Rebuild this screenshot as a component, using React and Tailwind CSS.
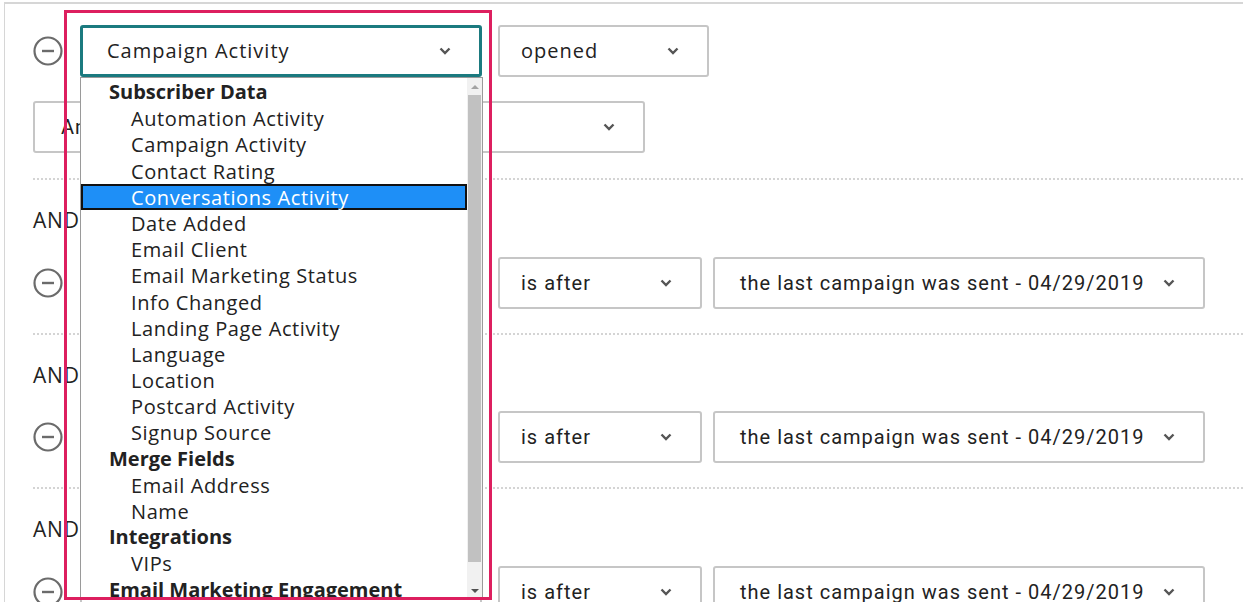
import clsx from 'clsx';

const Chevron = () => (
  <svg width="12" height="8" viewBox="0 0 12 8" className="shrink-0">
    <path d="M1.5 1.5L6 6l4.5-4.5" fill="none" stroke="#555" strokeWidth="2.4" />
  </svg>
);

const MinusCircle = () => (
  <svg width="30" height="30" viewBox="0 0 30 30" className="shrink-0">
    <circle cx="15" cy="15" r="13.5" fill="none" stroke="#6b6b6b" strokeWidth="2.2" />
    <path d="M9 15h12" stroke="#6b6b6b" strokeWidth="2.4" />
  </svg>
);

function Select({ className, text, focused, alt }) {
  return (
    <div
      className={clsx(
        'h-[52px] flex items-center justify-between pr-[28px] bg-white shrink-0 rounded-[3px]',
        focused ? 'border-[3px] border-[#1b7a7f]' : 'border-2 border-[#c6c6c6]',
        className
      )}
    >
      <span
        className={clsx(
          'text-[20px] text-[#222] whitespace-nowrap',
          alt ? 'font-[Roboto,sans-serif] tracking-[1px]' : 'tracking-[0.05em]'
        )}
      >
        {text}
      </span>
      <Chevron />
    </div>
  );
}

function Divider() {
  return <div className="border-t-2 border-dotted border-[#d4d4d4]" />;
}

function AndRow() {
  return (
    <>
      <Divider />
      <div className="pt-[27px] pb-[23px] h-[76.5px] text-[21px] leading-[26px] tracking-[0.04em] text-[#222]">AND</div>
      <div className="flex items-center">
        <MinusCircle />
        <Select className="ml-[17px] w-[402px] pl-[25px]" text="" />
        <Select className="ml-[16px] w-[204px] pl-[21px]" text="is after" alt />
        <Select className="ml-[11px] w-[492px] pl-[25px]" text="the last campaign was sent - 04/29/2019" alt />
      </div>
      <div className="h-[24px]" />
    </>
  );
}

const groups = [
  {
    label: 'Subscriber Data',
    items: [
      'Automation Activity',
      'Campaign Activity',
      'Contact Rating',
      'Conversations Activity',
      'Date Added',
      'Email Client',
      'Email Marketing Status',
      'Info Changed',
      'Landing Page Activity',
      'Language',
      'Location',
      'Postcard Activity',
      'Signup Source',
    ],
  },
  { label: 'Merge Fields', items: ['Email Address', 'Name'] },
  { label: 'Integrations', items: ['VIPs'] },
  { label: 'Email Marketing Engagement', items: [] },
];

function DropdownList() {
  return (
    <div className="absolute left-[80px] top-[77px] w-[403px] h-[521px] bg-white border border-[#9a9a9a] flex overflow-hidden">
      <div className="flex-1 pt-[1px] text-[20px] text-[#222] tracking-[0.03em]">
        {groups.map((g) => (
          <div key={g.label}>
            <div className="h-[26.2px] leading-[26px] pl-[28px] font-bold tracking-normal whitespace-nowrap">{g.label}</div>
            {g.items.map((it) => (
              <div
                key={it}
                className={clsx(
                  'h-[26.2px] leading-[23px] pl-[48px] whitespace-nowrap',
                  it === 'Conversations Activity' ? 'bg-[#1e8ff7] text-white border-2 border-[#111]' : 'border-2 border-transparent'
                )}
              >
                {it}
              </div>
            ))}
          </div>
        ))}
      </div>
      <div className="w-[15px] bg-[#f1f1f1] flex flex-col items-center">
        <div className="h-[17px] flex items-center justify-center">
          <div className="w-0 h-0 border-l-[4px] border-r-[4px] border-b-[4px] border-l-transparent border-r-transparent border-b-[#a3a3a3]" />
        </div>
        <div className="w-[13px] h-[467px] bg-[#c1c1c1]" />
        <div className="flex-1 flex items-end pb-[4px]">
          <div className="w-0 h-0 border-l-[4px] border-r-[4px] border-t-[4px] border-l-transparent border-r-transparent border-t-[#505050]" />
        </div>
      </div>
    </div>
  );
}

export default function App() {
  return (
    <div className="relative w-[1243px] h-[602px] overflow-hidden bg-white font-['Open_Sans',sans-serif]">
      <div className="ml-[4px] mt-[2px] border-t-2 border-l border-[#d6d6d6] pt-[21px] pl-[28px] h-[700px]">
        <div className="flex items-center">
          <MinusCircle />
          <Select className="ml-[17px] w-[402px] pl-[24px]" text="Campaign Activity" focused />
          <Select className="ml-[16px] w-[211px] pl-[21px]" text="opened" />
        </div>
        <div className="mt-[24px] mb-[25px]">
          <Select className="w-[612px] pl-[26px]" text="Any time" alt />
        </div>
        <AndRow />
        <AndRow />
        <AndRow />
      </div>
      <DropdownList />
      <div className="absolute left-[64px] top-[10px] w-[428px] h-[590px] border-[3px] border-[#dd1f5f] pointer-events-none" />
    </div>
  );
}
